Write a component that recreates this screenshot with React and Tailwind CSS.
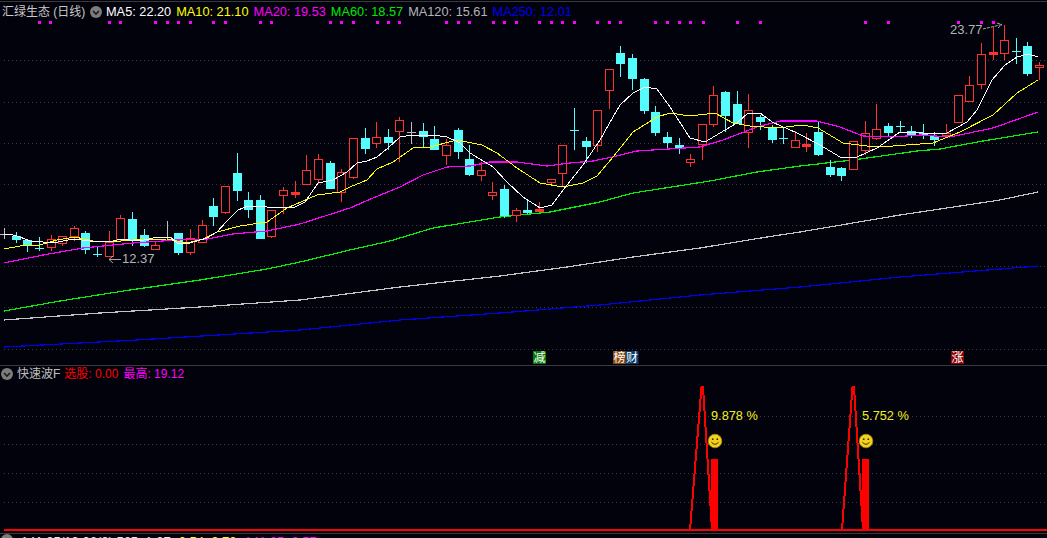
const RED = '#ff3232';
const CYAN = '#54fcfc';
const GRAY = '#c0c0c0';

// type, body top, body bottom, wick high, wick low
const CANDLES = [
  ['g', 234, 234, 228, 238], ['c', 236, 239, 232, 242], ['c', 240, 245, 240, 251], ['c', 248, 248, 237, 250],
  ['r', 239, 247, 235, 250], ['r', 236, 243, 236, 245], ['r', 228, 236, 226, 240], ['c', 233, 249, 231, 253],
  ['c', 254, 254, 246, 256], ['r', 242, 256, 231, 256], ['r', 218, 239, 215, 240], ['c', 219, 239, 212, 245],
  ['c', 235, 245, 229, 246], ['r', 245, 249, 242, 249], ['g', 237, 237, 221, 240], ['c', 233, 252, 233, 254],
  ['r', 238, 252, 229, 254], ['r', 225, 242, 220, 242], ['c', 206, 216, 198, 225], ['r', 186, 212, 186, 213],
  ['c', 173, 190, 153, 200], ['c', 200, 209, 192, 217], ['c', 200, 238, 195, 238], ['r', 210, 236, 210, 237],
  ['r', 190, 195, 187, 213], ['f', 192, 194, 181, 197], ['r', 170, 184, 155, 184], ['r', 159, 179, 154, 183],
  ['c', 163, 188, 161, 188], ['r', 172, 192, 169, 201], ['r', 138, 177, 138, 178], ['c', 138, 148, 128, 153],
  ['r', 137, 143, 122, 147], ['c', 137, 142, 129, 149], ['r', 120, 131, 117, 161], ['g', 132, 132, 122, 143],
  ['c', 131, 136, 123, 147], ['c', 139, 149, 126, 149], ['r', 145, 155, 139, 164], ['c', 130, 151, 128, 158],
  ['c', 159, 174, 145, 175], ['r', 170, 175, 162, 180], ['r', 192, 195, 182, 199], ['c', 189, 215, 185, 217],
  ['r', 210, 215, 208, 221], ['c', 210, 212, 200, 213], ['f', 209, 211, 202, 211], ['r', 179, 182, 179, 183],
  ['r', 145, 173, 145, 185], ['c', 130, 130, 108, 149], ['c', 141, 146, 137, 162], ['r', 110, 145, 110, 151],
  ['r', 69, 90, 69, 108], ['c', 53, 63, 46, 76], ['c', 58, 78, 54, 89], ['c', 79, 110, 78, 113],
  ['c', 112, 132, 106, 135], ['c', 137, 142, 132, 149], ['c', 145, 148, 138, 153], ['r', 159, 162, 154, 166],
  ['r', 124, 144, 124, 159], ['r', 95, 124, 86, 126], ['c', 92, 115, 91, 131], ['c', 104, 123, 91, 123],
  ['r', 110, 132, 94, 147], ['c', 117, 121, 115, 129], ['c', 128, 139, 125, 142], ['c', 138, 138, 128, 143],
  ['r', 140, 147, 131, 147], ['f', 144, 146, 133, 151], ['c', 132, 154, 122, 155], ['c', 167, 174, 160, 176],
  ['c', 168, 175, 167, 180], ['r', 141, 169, 141, 169], ['r', 133, 150, 121, 154], ['r', 129, 138, 104, 139],
  ['c', 126, 132, 123, 135], ['c', 126, 126, 121, 131], ['c', 131, 135, 126, 137], ['c', 133, 135, 124, 138],
  ['c', 136, 139, 132, 145], ['r', 133, 135, 124, 135], ['r', 95, 122, 95, 122], ['r', 85, 101, 76, 101],
  ['r', 54, 84, 43, 88], ['f', 52, 54, 27, 59], ['r', 40, 53, 25, 59], ['c', 51, 51, 38, 63],
  ['c', 46, 73, 42, 75], ['r', 65, 67, 62, 79],
];

const MA5 = '4,234 10,234 20,237 30,241 43,242 58,242 73,239 90,241 110,242 120,239 140,241 153,238 170,237 177,243 190,243 207,238 217,232 227,221 238,210 248,206 267,207 295,207 305,202 318,183 333,180 347,172 357,163 367,161 377,157 388,148 400,137 413,135 433,135 447,137 460,143 470,153 493,167 507,182 523,197 540,208 552,205 567,185 583,165 600,140 613,117 620,105 633,93 645,87 657,89 670,107 690,138 705,142 725,130 737,123 748,113 760,113 772,122 797,133 820,145 840,157 855,158 877,148 900,132 923,133 947,133 967,122 977,110 992,80 1005,65 1017,57 1028,54 1038,57';
const MA10 = '4,249 20,246 40,245 57,240 75,237 93,241 110,242 133,240 167,239 187,243 203,239 217,232 240,226 267,222 287,208 317,195 340,192 350,187 367,180 377,169 393,162 413,148 430,147 457,140 482,145 497,153 517,168 540,183 563,187 583,183 597,176 613,157 633,132 657,117 670,113 690,116 715,113 733,123 750,126 777,128 803,125 818,128 843,143 867,146 893,146 933,143 960,132 993,115 1017,93 1038,80';
const MA20 = '4,263 43,255 83,248 133,243 177,240 207,239 233,234 267,231 300,224 350,208 373,198 400,187 423,175 447,167 470,166 490,162 517,162 547,166 570,163 593,161 617,156 637,151 700,147 723,140 757,127 780,121 817,121 840,127 863,136 893,137 920,135 950,137 993,128 1038,112';
const MA60 = '4,311 60,301 130,290 200,280 267,269 300,262 350,250 390,241 433,228 500,217 550,212 600,202 633,193 710,181 757,172 800,166 853,160 917,151 940,149 983,141 1038,132';
const MA120 = '4,320 100,313 200,307 300,300 400,287 500,276 567,267 633,257 700,248 767,237 800,232 900,215 1000,200 1038,192';
const MA250 = '4,347 137,340 300,330 400,320 500,313 600,305 700,295 800,287 900,277 1038,266';

const MARKS = [38, 49, 108, 119, 154, 166, 177, 189, 212, 224, 259, 270, 329, 340, 352, 376, 387, 398, 445, 457, 468, 492, 503, 515, 538, 550, 561, 573, 596, 608, 619, 654, 666, 678, 689, 702, 736, 759, 864, 887, 957, 980, 992];
const TOP_GRID = [60.5, 102.5, 143.5, 184.5, 225.5, 266.5, 307.5, 349.5];
const LOW_GRID = [416.5, 444.5, 473.5, 502.5];

function Candle({ item, index }) {
  const [type, top, bottom, high, low] = item;
  const x = Math.round(4 + 11.63 * index) + 0.5;
  const color = type === 'c' ? CYAN : type === 'g' ? GRAY : RED;
  const flat = top === bottom;
  const solid = type === 'c' || type === 'f';
  return (
    <g>
      <line x1={x} x2={x} y1={high} y2={low + 1} stroke={color} />
      {flat ? (
        <line x1={x - 4.5} x2={x + 4.5} y1={top + 0.5} y2={top + 0.5} stroke={color} />
      ) : (
        <rect x={x - 4} y={top + 0.5} width={8} height={bottom - top} fill={solid ? color : '#02020c'} stroke={color} />
      )}
    </g>
  );
}

function Smiley({ x, y }) {
  return (
    <g>
      <circle cx={x} cy={y} r={6.8} fill="#f2d21e" stroke="#a88a10" strokeWidth={0.8} />
      <circle cx={x - 2.3} cy={y - 1.8} r={0.9} fill="#3a2c00" />
      <circle cx={x + 2.3} cy={y - 1.8} r={0.9} fill="#3a2c00" />
      <path d={`M${x - 3.6} ${y + 1.2} Q${x} ${y + 5.4} ${x + 3.6} ${y + 1.2}`} fill="none" stroke="#3a2c00" strokeWidth={1} />
    </g>
  );
}

function Chip({ x, color, children }) {
  return (
    <g>
      <rect x={x} y={351} width={13} height={13} fill={color} />
      <text x={x + 0.5} y={362} fontSize={12} fill="#ffffff">{children}</text>
    </g>
  );
}

function Toggle() {
  return (
    <svg width="12" height="12" viewBox="0 0 12 12" className="shrink-0">
      <circle cx="6" cy="6" r="6" fill="#7c7c7c" />
      <path d="M3 5 L6 8 L9 5" fill="none" stroke="#1c1c1c" strokeWidth="1.6" />
    </svg>
  );
}

function Peak({ left, top, right, barStart, barEnd }) {
  return (
    <g>
      <polyline
        points={`${left},530 ${top},387 ${top + 1.5},387 ${right},530`}
        fill="none"
        stroke="#ff0000"
        strokeWidth={2}
        shapeRendering="crispEdges"
      />
      <rect x={barStart} y={459} width={barEnd - barStart} height={71} fill="#ff0000" />
    </g>
  );
}

export default function App() {
  return (
    <div className="w-[1047px] h-[538px] overflow-hidden bg-[#02020c] flex flex-col font-['Liberation_Sans','Noto_Sans_CJK_SC',sans-serif]">
      <div className="h-px shrink-0" />
      <div className="h-px shrink-0 bg-[#3a3a3a]" />

      {/* main k-line panel */}
      <div className="relative h-[363px] shrink-0">
        <svg width="1047" height="363" viewBox="0 2 1047 363" className="block">
          {TOP_GRID.map((y) => (
            <line key={y} x1={4} x2={1047} y1={y} y2={y} stroke="#3c3c3c" strokeDasharray="1 3" />
          ))}
          {MARKS.map((x) => (
            <rect key={x} x={x} y={21} width={3} height={3} fill="#ff00ff" />
          ))}
          <g fill="none" strokeWidth={1.2} shapeRendering="crispEdges">
            <polyline points={MA250} stroke="#0000f0" />
            <polyline points={MA120} stroke="#c4c4c4" />
            <polyline points={MA60} stroke="#00f400" />
          </g>
          {CANDLES.map((item, i) => (
            <Candle key={i} item={item} index={i} />
          ))}
          <g fill="none" shapeRendering="crispEdges">
            <polyline points={MA20} stroke="#ff00ff" strokeWidth={1.2} />
            <polyline points={MA10} stroke="#ffff00" />
            <polyline points={MA5} stroke="#ffffff" />
          </g>

          <text x={950} y={34} fontSize={13} fill="#b4b4b4">23.77</text>
          <path d="M983 29 L1002 24.5 M997 23 L1002 24.5 L998 28" fill="none" stroke="#a8a8a8" strokeDasharray="3 1" />
          <text x={122} y={263} fontSize={13} fill="#b4b4b4">12.37</text>
          <path d="M121 259.5 L109 259.5 M113 256 L109 259.5 L113 263" fill="none" stroke="#a8a8a8" />

          <Chip x={533} color="#087a08">减</Chip>
          <Chip x={613} color="#8a4a12">榜</Chip>
          <Chip x={625.5} color="#0c3a6c">财</Chip>
          <Chip x={951} color="#8a0404">涨</Chip>
        </svg>

        <div className="absolute left-[2px] top-[1px] flex items-center h-[18px] text-[12.75px] whitespace-nowrap">
          <span className="text-[#c8c8c8] text-[12px] w-[88px]">汇绿生态 (日线)</span>
          <Toggle />
          <div className="ml-[4px] flex gap-[5px]">
            <span className="text-white">MA5: 22.20</span>
            <span className="text-[#ffff00]">MA10: 21.10</span>
            <span className="text-[#ff00ff]">MA20: 19.53</span>
            <span className="text-[#00e800]">MA60: 18.57</span>
            <span className="text-[#b4b4b4]">MA120: 15.61</span>
            <span className="text-[#0000f0]">MA250: 12.01</span>
          </div>
        </div>
      </div>

      <div className="h-px shrink-0 bg-[#3a3a3a]" />

      {/* indicator panel */}
      <div className="relative h-[167px] shrink-0">
        <svg width="1047" height="167" viewBox="0 366 1047 167" className="block">
          {LOW_GRID.map((y) => (
            <line key={y} x1={4} x2={1047} y1={y} y2={y} stroke="#3c3c3c" strokeDasharray="1 3" />
          ))}
          <rect x={4} y={529} width={1043} height={2} fill="#ff0000" />
          <Peak left={690} top={701.5} right={712} barStart={711} barEnd={718} />
          <Peak left={842} top={852.5} right={863} barStart={862} barEnd={869} />
          <text x={711} y={420} fontSize={12.75} fill="#f0f020">9.878 %</text>
          <text x={862} y={420} fontSize={12.75} fill="#f0f020">5.752 %</text>
          <Smiley x={715} y={441} />
          <Smiley x={866} y={441} />
        </svg>

        <div className="absolute left-[1px] top-0 flex items-center h-[16px] text-[12px] whitespace-nowrap">
          <Toggle />
          <span className="ml-[4px] text-[#c0c0c0]">快速波F</span>
          <span className="ml-[4px] text-[#ff0000]">选股: 0.00</span>
          <span className="ml-[5px] text-[#ff00ff]">最高: 19.12</span>
        </div>
      </div>

      <div className="h-px shrink-0 bg-[#3a3a3a]" />

      {/* clipped status strip */}
      <div className="flex items-start gap-[8px] pl-[1px] h-[4px] overflow-hidden text-[13px] leading-[16px] whitespace-nowrap">
        <Toggle />
        <span className="text-[#e8e8e8]">141.05/19.06(0) 565: 1.07</span>
        <span className="text-[#ffff00]">0.54: 0.70</span>
        <span className="text-[#ff00ff]">141.05: 0.57</span>
      </div>
    </div>
  );
}
